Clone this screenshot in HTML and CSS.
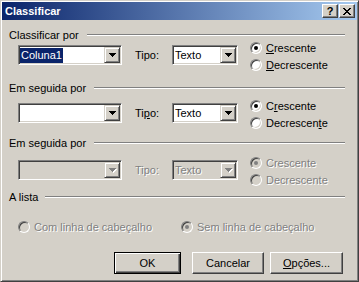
FILE: index.html
```html
<!DOCTYPE html>
<html lang="pt">
<head>
<meta charset="UTF-8" />
<title>Classificar</title>
<link rel="stylesheet" href="styles.css">
</head>
<body>

<div class="window">
  <!-- Barra de título -->
  <div class="titlebar">
    <span class="title">Classificar</span>
    <div class="tbtns">
      <span class="tbtn help">?</span>
      <span class="tbtn">
        <svg width="8" height="7" viewBox="0 0 8 7"><path d="M0 0h2v1H0zM6 0h2v1H6zM1 1h2v1H1zM5 1h2v1H5zM2 2h4v1H2zM3 3h2v1H3zM2 4h4v1H2zM1 5h2v1H1zM5 5h2v1H5zM0 6h2v1H0zM6 6h2v1H6z"/></svg>
      </span>
    </div>
  </div>

  <div class="content">

    <!-- Primeira chave -->
    <div class="group g1">
      <div class="group-head"><span>Classificar por</span><i class="rule"></i></div>
      <div class="sort-row">
        <div class="combo wide">
          <span class="value"><span class="sel">Coluna1</span></span>
          <span class="drop"><svg width="7" height="4" viewBox="0 0 7 4"><path d="M0 0h7v1H0zM1 1h5v1H1zM2 2h3v1H2zM3 3h1v1H3z"/></svg></span>
        </div>
        <span class="tipo">Tipo:</span>
        <div class="combo narrow">
          <span class="value">Texto</span>
          <span class="drop"><svg width="7" height="4" viewBox="0 0 7 4"><path d="M0 0h7v1H0zM1 1h5v1H1zM2 2h3v1H2zM3 3h1v1H3z"/></svg></span>
        </div>
        <div class="order">
          <label class="radio-item"><span class="radio checked"></span><span><u>C</u>rescente</span></label>
          <label class="radio-item"><span class="radio"></span><span><u>D</u>ecrescente</span></label>
        </div>
      </div>
    </div>

    <!-- Segunda chave -->
    <div class="group g2">
      <div class="group-head"><span>Em seguida por</span><i class="rule"></i></div>
      <div class="sort-row">
        <div class="combo wide">
          <span class="value"></span>
          <span class="drop"><svg width="7" height="4" viewBox="0 0 7 4"><path d="M0 0h7v1H0zM1 1h5v1H1zM2 2h3v1H2zM3 3h1v1H3z"/></svg></span>
        </div>
        <span class="tipo">Ti<u>p</u>o:</span>
        <div class="combo narrow">
          <span class="value">Texto</span>
          <span class="drop"><svg width="7" height="4" viewBox="0 0 7 4"><path d="M0 0h7v1H0zM1 1h5v1H1zM2 2h3v1H2zM3 3h1v1H3z"/></svg></span>
        </div>
        <div class="order">
          <label class="radio-item"><span class="radio checked"></span><span>C<u>r</u>escente</span></label>
          <label class="radio-item"><span class="radio"></span><span>Decrescen<u>t</u>e</span></label>
        </div>
      </div>
    </div>

    <!-- Terceira chave (desativada) -->
    <div class="group g3">
      <div class="group-head"><span>Em seguida por</span><i class="rule"></i></div>
      <div class="sort-row disabled">
        <div class="combo wide">
          <span class="value"></span>
          <span class="drop"><svg width="7" height="4" viewBox="0 0 7 4"><path d="M0 0h7v1H0zM1 1h5v1H1zM2 2h3v1H2zM3 3h1v1H3z"/></svg></span>
        </div>
        <span class="tipo">Tipo:</span>
        <div class="combo narrow">
          <span class="value">Texto</span>
          <span class="drop"><svg width="7" height="4" viewBox="0 0 7 4"><path d="M0 0h7v1H0zM1 1h5v1H1zM2 2h3v1H2zM3 3h1v1H3z"/></svg></span>
        </div>
        <div class="order">
          <label class="radio-item"><span class="radio checked"></span><span>Crescente</span></label>
          <label class="radio-item"><span class="radio"></span><span>Decrescente</span></label>
        </div>
      </div>
    </div>

    <!-- A lista -->
    <div class="group g4">
      <div class="group-head"><span>A lista</span><i class="rule short"></i></div>
      <div class="list-row disabled">
        <label class="radio-item first"><span class="radio"></span><span>Com linha de cabeçalho</span></label>
        <label class="radio-item"><span class="radio checked"></span><span>Sem linha de cabeçalho</span></label>
      </div>
    </div>

    <!-- Botões -->
    <div class="buttons">
      <button class="btn default ok">OK</button>
      <button class="btn cancel">Cancelar</button>
      <button class="btn options"><span><u>O</u>pções...</span></button>
    </div>

  </div>
</div>

</body>
</html>
```

FILE: styles.css
```css
* {
  box-sizing: border-box;
}

body {
  margin: 0;
  background: #D4D0C8;
  font-family: "Liberation Sans", Arial, sans-serif;
  font-size: 11px;
  color: #000;
}

/* Janela */
.window {
  width: 359px;
  height: 282px;
  padding: 1px;
  border: 1px solid;
  border-color: #D4D0C8 #404040 #404040 #D4D0C8;
  box-shadow: inset 1px 1px #fff, inset -1px -1px #808080;
  display: flex;
  flex-direction: column;
}

.titlebar {
  height: 18px;
  background: linear-gradient(to right, #0A246A, #A6CAF0);
  display: flex;
  align-items: center;
  justify-content: space-between;
  padding: 0 2px 0 3px;
}

.title {
  color: #fff;
  font-weight: bold;
}

.tbtns {
  display: flex;
  gap: 1px;
}

.tbtn {
  width: 16px;
  height: 14px;
  background: #D4D0C8;
  border: 1px solid;
  border-color: #fff #404040 #404040 #fff;
  box-shadow: inset -1px -1px #808080;
  display: flex;
  align-items: center;
  justify-content: center;
}

.tbtn.help {
  font-weight: bold;
  font-size: 11px;
  line-height: 12px;
}

.content {
  flex: 1;
  padding: 8px 12px 0 7px;
}

/* Cabeçalho do grupo com linha gravada */
.group-head {
  display: flex;
  align-items: center;
  height: 14px;
  line-height: 14px;
}

.rule {
  flex: 1;
  height: 2px;
  margin-left: 8px;
  border-top: 1px solid #808080;
  border-bottom: 1px solid #fff;
}

.rule.short {
  margin-left: 7px;
}

.sort-row {
  display: flex;
  align-items: flex-start;
  height: 34px;
  padding-left: 9px;
}

.g1 .sort-row { margin-top: -3px; }
.g2 { margin-top: 8px; }
.g2 .sort-row { margin-top: 2px; }
.g3 { margin-top: 5px; }
.g3 .sort-row { margin-top: 4px; }
.g4 { margin-top: 2px; }

/* Caixa de combinação */
.combo {
  margin-top: 6px;
  height: 20px;
  padding: 1px;
  border: 1px solid;
  border-color: #808080 #fff #fff #808080;
  box-shadow: inset 1px 1px #404040, inset -1px -1px #D4D0C8;
  background: #fff;
  display: flex;
}

.combo.wide { width: 104px; }
.combo.narrow { width: 66px; }

.combo .value {
  flex: 1;
  display: flex;
  align-items: center;
  padding-left: 1px;
  overflow: hidden;
}

.combo .sel {
  margin-left: -1px;
  padding: 0 1px;
  line-height: 15px;
  background: #0A246A;
  color: #fff;
}

.drop {
  width: 16px;
  height: 16px;
  background: #D4D0C8;
  border: 1px solid;
  border-color: #D4D0C8 #404040 #404040 #D4D0C8;
  box-shadow: inset 1px 1px #fff, inset -1px -1px #808080;
  display: flex;
  align-items: center;
  justify-content: center;
}

.tipo {
  margin: 6px 0 0 13px;
  width: 37px;
  line-height: 20px;
}

.order {
  margin-left: 12px;
  display: flex;
  flex-direction: column;
}

/* Botões de opção */
.radio-item {
  display: flex;
  align-items: center;
  height: 17px;
  gap: 4px;
}

.radio {
  position: relative;
  width: 12px;
  height: 12px;
  border-radius: 50%;
  border: 1px solid;
  border-color: #808080 #fff #fff #808080;
  box-shadow: inset 1px 1px #404040, inset -1px -1px #D4D0C8;
  background: #fff;
}

.radio.checked::after {
  content: "";
  position: absolute;
  left: 3px;
  top: 3px;
  width: 4px;
  height: 4px;
  border-radius: 50%;
  background: #000;
}

/* Estado desativado */
.disabled {
  color: #808080;
  text-shadow: 1px 1px #fff;
}

.disabled .combo { background: #D4D0C8; }
.disabled .drop svg { fill: #808080; filter: drop-shadow(1px 1px 0 #fff); }
.disabled .radio { background: #D4D0C8; }
.disabled .radio.checked::after { background: #808080; }

.list-row {
  display: flex;
  margin-top: 14px;
  padding-left: 9px;
}

.list-row .first {
  width: 163px;
}

/* Botões inferiores */
.buttons {
  display: flex;
  justify-content: flex-end;
  margin-top: 17px;
  padding-right: 2px;
}

.btn {
  height: 22px;
  padding: 0;
  font: inherit;
  color: #000;
  background: #D4D0C8;
  border: 1px solid;
  border-color: #fff #404040 #404040 #fff;
  box-shadow: inset -1px -1px #808080;
}

.btn.default {
  border-color: #000;
  box-shadow: inset 1px 1px #fff, inset -1px -1px #404040, inset -2px -2px #808080;
}

.ok { width: 67px; }
.cancel { width: 72px; margin-left: 11px; }
.options { width: 73px; margin-left: 6px; }
```
